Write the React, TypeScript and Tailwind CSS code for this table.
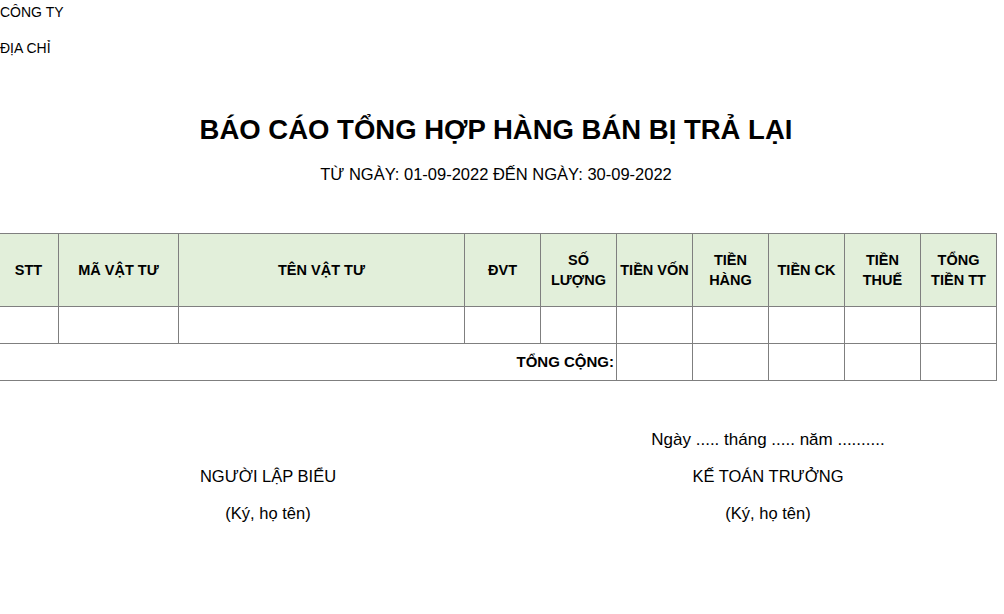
import React from "react";

const cols = [
  { w: 60, label: ["STT"] },
  { w: 120, label: ["MÃ VẬT TƯ"] },
  { w: 286, label: ["TÊN VẬT TƯ"] },
  { w: 76, label: ["ĐVT"] },
  { w: 76, label: ["SỐ", "LƯỢNG"] },
  { w: 76, label: ["TIỀN VỐN"] },
  { w: 76, label: ["TIỀN", "HÀNG"] },
  { w: 76, label: ["TIỀN CK"] },
  { w: 76, label: ["TIỀN", "THUẾ"] },
  { w: 76, label: ["TỔNG", "TIỀN TT"] },
];

const cell = "border border-[#7f7f7f] p-0";

export default function App() {
  return (
    <div
      className="w-[1004px] h-[614px] overflow-hidden bg-white text-black"
      style={{ fontFamily: '"Liberation Sans", Arial, sans-serif' }}
    >
      <div className="h-[24px] flex items-center text-[14px]">CÔNG TY</div>
      <div className="mt-[12px] h-[24px] flex items-center text-[14px]">ĐỊA CHỈ</div>

      <div className="mt-[50px] h-[40px] pr-[12px] flex items-center justify-center text-[27.5px] font-bold">
        BÁO CÁO TỔNG HỢP HÀNG BÁN BỊ TRẢ LẠI
      </div>
      <div className="mt-[12px] h-[24px] pr-[12px] flex items-center justify-center text-[16.5px]">
        TỪ NGÀY: 01-09-2022 ĐẾN NGÀY: 30-09-2022
      </div>

      <table className="mt-[47px] -ml-[2px] w-[998px] table-fixed border-collapse text-[14.5px]">
        <colgroup>
          {cols.map((c, i) => (
            <col key={i} style={{ width: c.w }} />
          ))}
        </colgroup>
        <thead>
          <tr className="h-[73px] bg-[#e2efda]">
            {cols.map((c, i) => (
              <th key={i} className={`${cell} font-bold text-center leading-[20px]`}>
                {c.label.map((l, j) => (
                  <div key={j}>{l}</div>
                ))}
              </th>
            ))}
          </tr>
        </thead>
        <tbody>
          <tr className="h-[37px]">
            {cols.map((_, i) => (
              <td key={i} className={cell} />
            ))}
          </tr>
          <tr className="h-[37px]">
            <td colSpan={5} className={`${cell} text-right font-bold pr-[2px] text-[15px]`}>
              TỔNG CỘNG:
            </td>
            {cols.slice(5).map((_, i) => (
              <td key={i} className={cell} />
            ))}
          </tr>
        </tbody>
      </table>

      <div className="mt-[47px] flex pl-[68px] gap-[100px] text-[16.5px]">
        <div className="w-[400px] flex flex-col items-center">
          <div className="h-[24px]" />
          <div className="mt-[12px] h-[24px] flex items-center">NGƯỜI LẬP BIỂU</div>
          <div className="mt-[13px] h-[24px] flex items-center">(Ký, họ tên)</div>
        </div>
        <div className="w-[400px] flex flex-col items-center">
          <div className="h-[24px] flex items-center text-[17px]">Ngày ..... tháng ..... năm ..........</div>
          <div className="mt-[12px] h-[24px] flex items-center">KẾ TOÁN TRƯỞNG</div>
          <div className="mt-[13px] h-[24px] flex items-center">(Ký, họ tên)</div>
        </div>
      </div>
    </div>
  );
}
